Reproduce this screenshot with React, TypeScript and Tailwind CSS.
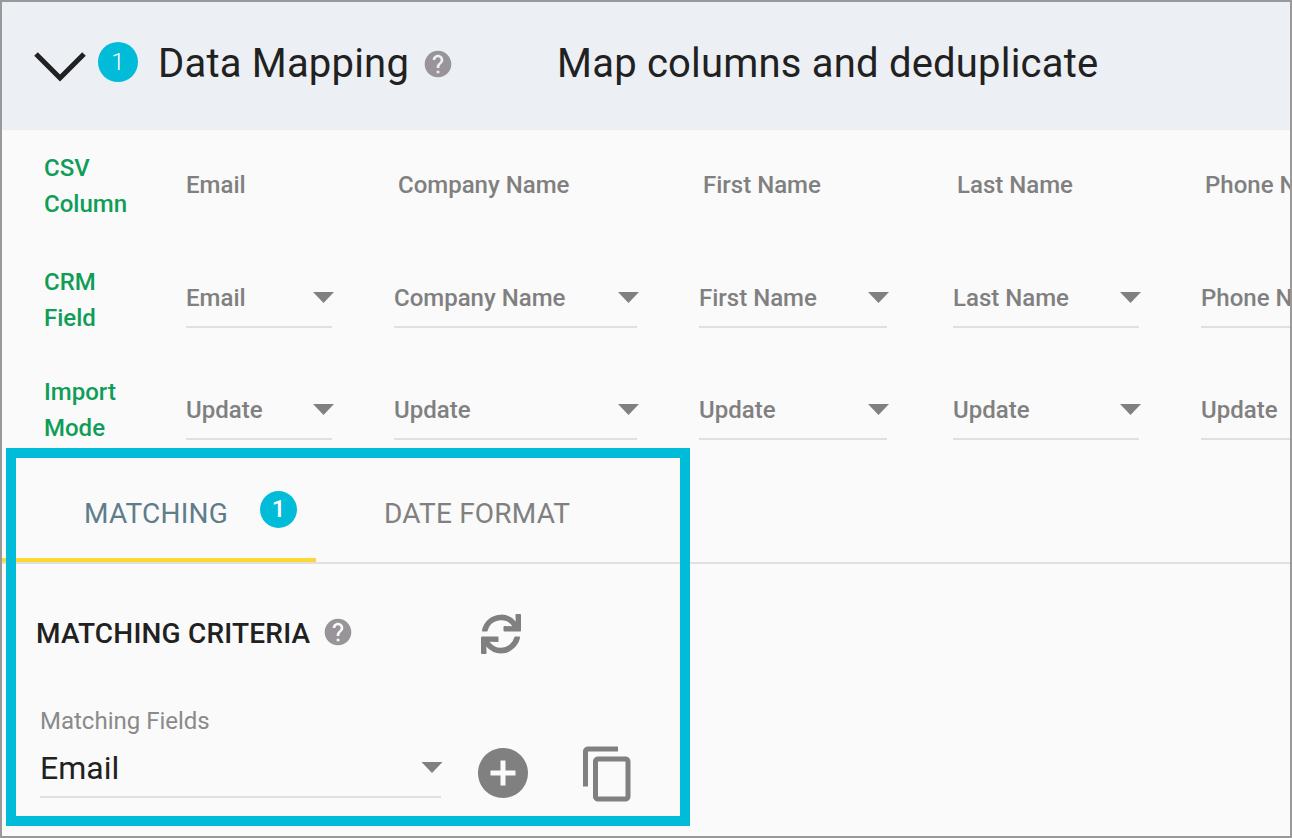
import { FaSync } from "react-icons/fa";
import { MdAddCircle, MdContentCopy, MdHelp } from "react-icons/md";

const columns = [
  { name: "Email", width: "w-[208px]", field: "w-[146px]", offset: "" },
  { name: "Company Name", width: "w-[305px]", field: "w-[243px]", offset: "pl-[4px]" },
  { name: "First Name", width: "w-[254px]", field: "w-[188px]", offset: "pl-[4px]" },
  { name: "Last Name", width: "w-[248px]", field: "w-[186px]", offset: "pl-[4px]" },
  { name: "Phone Number", width: "w-[160px]", field: "w-[160px]", offset: "pl-[4px]" },
];

function Caret({ className }: { className: string }) {
  return (
    <svg viewBox="0 0 21 11" className={className}>
      <polygon points="0,0 21,0 10.5,11" fill="#808080" />
    </svg>
  );
}

function Select({ value, field, last }: { value: string; field: string; last: boolean }) {
  return (
    <div className={`${field} h-[60px] flex items-center justify-between border-b-2 border-[#e0e0e0]`}>
      <span className="pt-[2px] text-[24px] font-medium text-[#808080] whitespace-nowrap">{value}</span>
      {!last && <Caret className="w-[21px] h-[11px] shrink-0 -mr-[2px]" />}
    </div>
  );
}

function RowLabel({ lines, className }: { lines: string[]; className: string }) {
  return (
    <div className={`w-[142px] shrink-0 ${className} text-[24px] leading-[36px] font-medium text-[#0f9d58]`}>
      {lines.map((line) => (
        <div key={line}>{line}</div>
      ))}
    </div>
  );
}

function SelectRow({ label, labelClass, mode }: { label: string[]; labelClass: string; mode?: string }) {
  return (
    <div className="flex items-center h-[72px] pl-[42px]">
      <RowLabel lines={label} className={labelClass} />
      {columns.map((col, i) => (
        <div key={col.name} className={`${col.width} shrink-0`}>
          <Select value={mode ?? col.name} field={col.field} last={i === columns.length - 1} />
        </div>
      ))}
    </div>
  );
}

export default function App() {
  return (
    <div
      className="relative w-[1292px] h-[838px] border-2 border-[#999999] bg-[#fafafa] overflow-hidden text-[#212121]"
      style={{ fontFamily: "Roboto, sans-serif" }}
    >
      {/* Header */}
      <div className="flex items-center h-[128px] bg-[#eceff3] pl-[32px]">
        <svg viewBox="0 0 52 31" className="w-[52px] h-[31px]" fill="none">
          <path d="M2 3 L26 27 L50 3" stroke="#212121" strokeWidth="5" />
        </svg>
        <div className="ml-[12px] w-[40px] h-[40px] rounded-full bg-[#00bcd8] text-white text-[24px] font-light flex items-center justify-center -mt-[8px]">
          1
        </div>
        <span className="ml-[20px] -mt-[4px] text-[40px] tracking-[0.2px] whitespace-nowrap">Data Mapping</span>
        <MdHelp className="ml-[13px] -mt-[4px] w-[32px] h-[32px] text-[#98949a]" />
        <span className="ml-[103px] -mt-[4px] text-[40px] tracking-[0.2px] whitespace-nowrap">Map columns and deduplicate</span>
      </div>

      {/* Mapping grid */}
      <div className="flex items-center h-[72px] pl-[42px] mt-[19px]">
        <RowLabel lines={["CSV", "Column"]} className="pt-[2px]" />
        {columns.map((col) => (
          <div key={col.name} className={`${col.width} shrink-0 ${col.offset} text-[24px] font-medium text-[#808080] whitespace-nowrap`}>
            {col.name}
          </div>
        ))}
      </div>
      <div className="mt-[41px]">
        <SelectRow label={["CRM", "Field"]} labelClass="pt-[3px]" />
      </div>
      <div className="mt-[40px]">
        <SelectRow label={["Import", "Mode"]} labelClass="pt-0" mode="Update" />
      </div>

      {/* Tabs */}
      <div className="flex h-[118px] border-b-2 border-[#e0e0e0]">
        <div className="w-[314px] h-[116px] border-b-4 border-[#fdd835] flex items-center pl-[82px] pt-[24px]">
          <span className="text-[28px] tracking-[0.2px] text-[#607d8b]">MATCHING</span>
          <span className="ml-[32px] -mt-[10px] w-[37px] h-[37px] rounded-full bg-[#00bcd8] text-white text-[24px] font-medium flex items-center justify-center">
            1
          </span>
        </div>
        <div className="flex items-center pl-[68px] h-[116px] pt-[20px] text-[28px] tracking-[0.2px] text-[#808080]">DATE FORMAT</div>
      </div>

      {/* Matching criteria */}
      <div className="flex items-center h-[52px] mt-[44px] pl-[34px]">
        <span className="text-[28px] tracking-[0.2px] font-medium whitespace-nowrap">MATCHING CRITERIA</span>
        <MdHelp className="ml-[12px] -mt-[4px] w-[32px] h-[32px] text-[#98949a]" />
        <FaSync className="ml-[127px] w-[40px] h-[40px] text-[#808080]" />
      </div>

      <div className="flex items-end mt-[47px] pl-[38px]">
        <div className="w-[401px]">
          <div className="text-[24px] leading-[28px] text-[#8a8a8a]">Matching Fields</div>
          <div className="flex items-center justify-between h-[63px] pt-[5px] border-b-2 border-[#e0e0e0]">
            <span className="text-[32px] text-[#212121]">Email</span>
            <Caret className="w-[22px] h-[11px] -mr-[2px] -mt-[2px]" />
          </div>
        </div>
        <MdAddCircle className="ml-[32px] -mb-[5px] w-[60px] h-[60px] text-[#808080]" />
        <MdContentCopy className="ml-[45px] -mb-[6px] w-[60px] h-[60px] text-[#808080]" />
      </div>

      {/* Highlight frame */}
      <div className="absolute left-[4px] top-[446px] w-[684px] h-[378px] border-[10px] border-[#00bcd8] pointer-events-none" />
    </div>
  );
}
